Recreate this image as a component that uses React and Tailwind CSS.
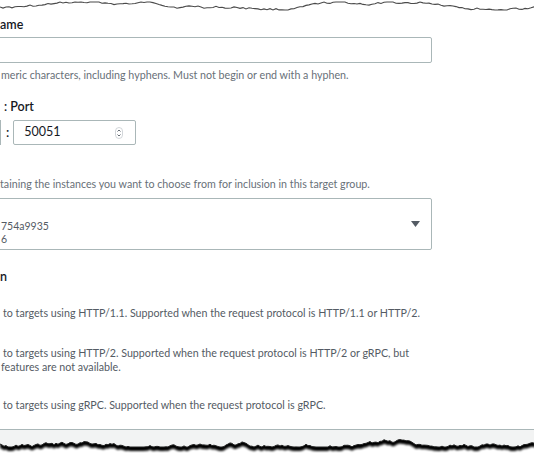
import React from "react";

// seeded wobble for the torn paper edges
function jagged(seed, width, base, spread, step) {
  let s = seed;
  const rnd = () => {
    s = (s * 9301 + 49297) % 233280;
    return s / 233280;
  };
  const pts = [];
  let y = base;
  for (let x = 0; x <= width + step; x += step) {
    y += (rnd() - 0.5) * spread;
    y = Math.max(base - 4, Math.min(base + 4, y));
    pts.push([x, +y.toFixed(1)]);
  }
  return pts;
}

function TopEdge() {
  const pts = jagged(17, 534, 6, 2.6, 3);
  const d = pts.map((p, i) => `${i ? "L" : "M"}${p[0]},${p[1]}`).join(" ");
  return (
    <svg width="534" height="17" className="block shrink-0">
      <path d={d} fill="none" stroke="#4a4a4a" strokeWidth="1.1" />
    </svg>
  );
}

function BottomEdge() {
  const pts = jagged(91, 534, 13, 3, 2);
  const edge = pts.map((p) => `L${p[0]},${p[1]}`).reverse().join(" ");
  const d = `M0,0 L534,0 ${edge} Z`;
  const line = pts.map((p, i) => `${i ? "L" : "M"}${p[0]},${p[1]}`).join(" ");
  return (
    <svg width="534" height="32" className="block shrink-0">
      <defs>
        <filter id="tear" x="-5%" y="-50%" width="110%" height="200%">
          <feGaussianBlur stdDeviation="1.3" />
        </filter>
      </defs>
      <path d={d} fill="#000" transform="translate(0,4)" filter="url(#tear)" />
      <path d={d} fill="#f2f3f3" />
      <path d={line} fill="none" stroke="#222" strokeWidth="1" />
    </svg>
  );
}

export default function App() {
  return (
    <div className="w-[534px] h-[462px] overflow-hidden bg-white flex flex-col font-['Lato',sans-serif] text-[#16191f]">
      <TopEdge />

      <div className="border-b border-[#aab7b8] pb-[17px]">
        <div className="text-[12.5px] leading-4 font-semibold">ame</div>
        <div className="mt-1 -ml-[2px] w-[434px] h-[26px] border border-[#aab7b8] rounded-[2px]"></div>
        <p className="mt-[5px] text-[10.7px] leading-[14px] text-[#687078] pl-px">
          meric characters, including hyphens. Must not begin or end with a hyphen.
        </p>

        <div className="mt-[17px] pl-[4px] text-[12.5px] leading-4 font-semibold">: Port</div>
        <div className="mt-[5px] flex items-center h-[25px]">
          <div className="w-px h-[25px] bg-[#aab7b8]"></div>
          <span className="ml-[5px] text-[13px] font-semibold">:</span>
          <div className="ml-[4px] w-[123px] h-[25px] border border-[#aab7b8] rounded-[2px] flex items-center justify-between pl-[10px] pr-[12px]">
            <span className="text-[12.5px]">50051</span>
            <svg width="8" height="12" viewBox="0 0 8 12">
              <rect x="0.5" y="0.5" width="7" height="11" rx="3.5" fill="none" stroke="#c7ccd1" strokeWidth="0.8" />
              <path d="M2.5 4.5 L4 3 L5.5 4.5" fill="none" stroke="#545b64" strokeWidth="0.9" />
              <path d="M2.5 7.5 L4 9 L5.5 7.5" fill="none" stroke="#545b64" strokeWidth="0.9" />
            </svg>
          </div>
        </div>

        <p className="mt-[32px] text-[10.7px] leading-[14px] text-[#687078]">
          taining the instances you want to choose from for inclusion in this target group.
        </p>
        <div className="mt-[7px] -ml-[2px] w-[434px] h-[52px] border border-[#aab7b8] rounded-[2px] flex">
          <div className="flex-1 pt-[21px] pl-[2px] text-[10.5px] leading-[13px] text-[#545b64]">
            <div>754a9935</div>
            <div>6</div>
          </div>
          <div className="pt-[22px] pr-[11px]">
            <svg width="9" height="6" viewBox="0 0 9 6">
              <path d="M0 0 H9 L4.5 6 Z" fill="#545b64" />
            </svg>
          </div>
        </div>

        <div className="mt-[19px] text-[12.5px] leading-4 font-semibold">n</div>

        <div className="text-[10.7px] leading-[14px] text-[#545b64]">
          <p className="mt-[21px] pl-[3px]">to targets using HTTP/1.1. Supported when the request protocol is HTTP/1.1 or HTTP/2.</p>
          <p className="mt-[26px] pl-[3px]">to targets using HTTP/2. Supported when the request protocol is HTTP/2 or gRPC, but</p>
          <p className="pl-[1px]">features are not available.</p>
          <p className="mt-[24px] pl-[3px]">to targets using gRPC. Supported when the request protocol is gRPC.</p>
        </div>
      </div>

      <BottomEdge />
    </div>
  );
}
